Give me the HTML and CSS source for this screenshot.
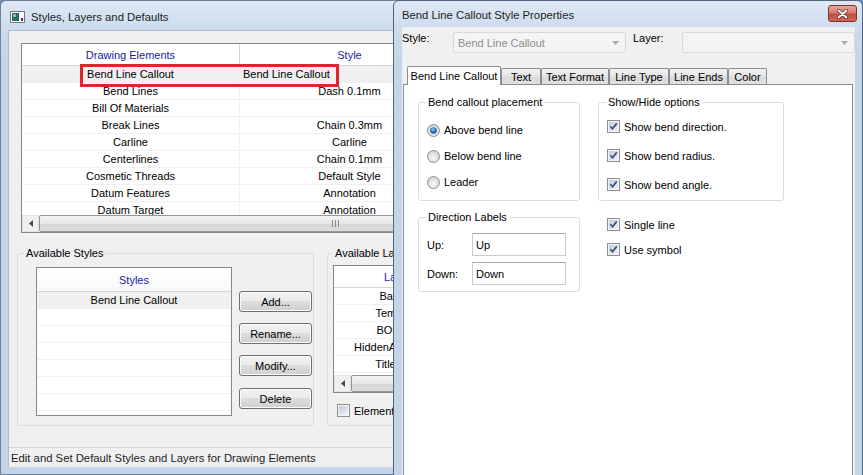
FILE: index.html
```html
<!DOCTYPE html>
<html>
<head>
<meta charset="utf-8">
<title>Styles, Layers and Defaults</title>
<link rel="stylesheet" href="styles.css">
</head>
<body>
<svg class="defs" aria-hidden="true">
  <defs>
    <linearGradient id="cbIn" x1="0" y1="0" x2="1" y2="1">
      <stop offset="0" stop-color="#c3cddc"/>
      <stop offset="1" stop-color="#eef2f7"/>
    </linearGradient>
    <radialGradient id="rbBg" cx="0.5" cy="0.6" r="0.6">
      <stop offset="0" stop-color="#fbfbfb"/>
      <stop offset="1" stop-color="#cfcfcf"/>
    </radialGradient>
    <radialGradient id="rbDot" cx="0.45" cy="0.35" r="0.7">
      <stop offset="0" stop-color="#8fc4f0"/>
      <stop offset="0.6" stop-color="#2a6db6"/>
      <stop offset="1" stop-color="#0f3f80"/>
    </radialGradient>
  </defs>
</svg>

<section class="win main-win">
  <header class="titlebar">
    <svg class="appicon" viewBox="0 0 15 12" width="15" height="12">
      <rect x="0.5" y="0.5" width="14" height="11" fill="#ffffff" stroke="#6d7a86"/>
      <rect x="2" y="2" width="7" height="8" fill="#2f6b62"/>
      <rect x="3" y="3" width="3" height="3" fill="#8fb5ad"/>
      <rect x="11" y="7" width="2" height="3" fill="#3a3a3a"/>
    </svg>
    <span class="title">Styles, Layers and Defaults</span>
  </header>
  <div class="client main-client">
    <div class="lv elements">
      <div class="lv-head">
        <div class="col c1">Drawing Elements</div>
        <div class="col c2">Style</div>
      </div>
      <div class="lv-body">
        <div class="row sel"><div class="col c1">Bend Line Callout</div><div class="col c2 lft">Bend Line Callout</div></div>
        <div class="row"><div class="col c1">Bend Lines</div><div class="col c2">Dash 0.1mm</div></div>
        <div class="row"><div class="col c1">Bill Of Materials</div><div class="col c2"></div></div>
        <div class="row"><div class="col c1">Break Lines</div><div class="col c2">Chain 0.3mm</div></div>
        <div class="row"><div class="col c1">Carline</div><div class="col c2">Carline</div></div>
        <div class="row"><div class="col c1">Centerlines</div><div class="col c2">Chain 0.1mm</div></div>
        <div class="row"><div class="col c1">Cosmetic Threads</div><div class="col c2">Default Style</div></div>
        <div class="row"><div class="col c1">Datum Features</div><div class="col c2">Annotation</div></div>
        <div class="row"><div class="col c1">Datum Target</div><div class="col c2">Annotation</div></div>
      </div>
      <div class="hscroll">
        <div class="sb-btn"><svg viewBox="0 0 4 7" width="4" height="7"><path d="M4 0V7L0 3.5Z" fill="#4a4a4a"/></svg></div>
        <div class="sb-thumb wide-thumb"><svg class="grip" viewBox="0 0 7 7" width="7" height="7"><path d="M0.5 0v7M3.5 0v7M6.5 0v7" stroke="#8a8a8a"/></svg></div>
      </div>
      <div class="highlight"></div>
    </div>

    <div class="lower">
      <fieldset class="grp styles-grp">
        <legend>Available Styles</legend>
        <div class="grp-in styles-in">
          <div class="lv styles-lv">
            <div class="lv-head short"><div class="col full">Styles</div></div>
            <div class="lv-body">
              <div class="row sel"><div class="col full">Bend Line Callout</div></div>
              <div class="row"><div class="col full"></div></div>
              <div class="row"><div class="col full"></div></div>
              <div class="row"><div class="col full"></div></div>
              <div class="row"><div class="col full"></div></div>
              <div class="row"><div class="col full"></div></div>
              <div class="row"><div class="col full"></div></div>
            </div>
          </div>
          <div class="btns">
            <button class="btn">Add...</button>
            <button class="btn">Rename...</button>
            <button class="btn">Modify...</button>
            <button class="btn">Delete</button>
          </div>
        </div>
      </fieldset>

      <fieldset class="grp layers-grp">
        <legend>Available Layers</legend>
        <div class="grp-in layers-in">
          <div class="lv layers-lv">
            <div class="lv-head"><div class="col lc">Layers</div></div>
            <div class="lv-body">
              <div class="row"><div class="col lc">Balloons</div></div>
              <div class="row"><div class="col lc">Templates</div></div>
              <div class="row"><div class="col lc">BOM Text</div></div>
              <div class="row"><div class="col lc">HiddenAnnotations</div></div>
              <div class="row"><div class="col lc">Title Block</div></div>
            </div>
            <div class="hscroll">
              <div class="sb-btn"><svg viewBox="0 0 4 7" width="4" height="7"><path d="M4 0V7L0 3.5Z" fill="#4a4a4a"/></svg></div>
              <div class="sb-thumb"></div>
            </div>
          </div>
          <label class="chk elements-chk">
            <svg class="cb" viewBox="0 0 13 13" width="13" height="13">
              <rect x="0.5" y="0.5" width="12" height="12" fill="#f4f4f4" stroke="#8e8f8f"/>
              <rect x="2" y="2" width="9" height="9" fill="url(#cbIn)"/>
            </svg>
            <span>Elements with layers</span>
          </label>
        </div>
      </fieldset>
    </div>

    <div class="status">Edit and Set Default Styles and Layers for Drawing Elements</div>
  </div>
</section>

<section class="win dlg">
  <header class="titlebar dlg-title">
    <span class="title">Bend Line Callout Style Properties</span>
    <div class="close">
      <svg viewBox="0 0 11 10" width="11" height="10">
        <path d="M1.5 1.5L9.5 8.5M9.5 1.5L1.5 8.5" stroke="#5a2522" stroke-width="3.2" stroke-linecap="round"/>
        <path d="M1.5 1.5L9.5 8.5M9.5 1.5L1.5 8.5" stroke="#ffffff" stroke-width="1.8" stroke-linecap="round"/>
      </svg>
    </div>
  </header>
  <div class="client dlg-client">
    <div class="combo-row">
      <span class="lbl style-lbl">Style:</span>
      <div class="combo"><span class="combo-text">Bend Line Callout</span><svg class="dd" viewBox="0 0 7 4" width="7" height="4"><path d="M0 0H7L3.5 4Z" fill="#a9a9a9"/></svg></div>
      <span class="lbl layer-lbl">Layer:</span>
      <div class="combo"><span class="combo-text"></span><svg class="dd" viewBox="0 0 7 4" width="7" height="4"><path d="M0 0H7L3.5 4Z" fill="#a9a9a9"/></svg></div>
    </div>

    <div class="tabs">
      <div class="tab active">Bend Line Callout</div>
      <div class="tab t-text">Text</div>
      <div class="tab t-fmt">Text Format</div>
      <div class="tab t-lt">Line Type</div>
      <div class="tab t-le">Line Ends</div>
      <div class="tab t-col">Color</div>
    </div>

    <div class="tabpanel">
      <div class="panel-grid">
        <fieldset class="grp dgrp placement">
          <legend>Bend callout placement</legend>
          <div class="opt-list radios">
            <label class="opt"><svg class="rb" viewBox="0 0 13 13" width="13" height="13"><circle cx="6.5" cy="6.5" r="6" fill="url(#rbBg)" stroke="#8e8f8f"/><circle cx="6.5" cy="6.5" r="3.3" fill="url(#rbDot)"/></svg><span>Above bend line</span></label>
            <label class="opt"><svg class="rb" viewBox="0 0 13 13" width="13" height="13"><circle cx="6.5" cy="6.5" r="6" fill="url(#rbBg)" stroke="#8e8f8f"/></svg><span>Below bend line</span></label>
            <label class="opt"><svg class="rb" viewBox="0 0 13 13" width="13" height="13"><circle cx="6.5" cy="6.5" r="6" fill="url(#rbBg)" stroke="#8e8f8f"/></svg><span>Leader</span></label>
          </div>
        </fieldset>

        <fieldset class="grp dgrp showhide">
          <legend>Show/Hide options</legend>
          <div class="opt-list checks">
            <label class="opt"><svg class="cb" viewBox="0 0 13 13" width="13" height="13"><rect x="0.5" y="0.5" width="12" height="12" fill="#f4f4f4" stroke="#8e8f8f"/><rect x="2" y="2" width="9" height="9" fill="url(#cbIn)"/><path d="M3.3 6.3L5.5 8.8L9.8 3.4" fill="none" stroke="#3d4f86" stroke-width="1.7"/></svg><span>Show bend direction.</span></label>
            <label class="opt"><svg class="cb" viewBox="0 0 13 13" width="13" height="13"><rect x="0.5" y="0.5" width="12" height="12" fill="#f4f4f4" stroke="#8e8f8f"/><rect x="2" y="2" width="9" height="9" fill="url(#cbIn)"/><path d="M3.3 6.3L5.5 8.8L9.8 3.4" fill="none" stroke="#3d4f86" stroke-width="1.7"/></svg><span>Show bend radius.</span></label>
            <label class="opt"><svg class="cb" viewBox="0 0 13 13" width="13" height="13"><rect x="0.5" y="0.5" width="12" height="12" fill="#f4f4f4" stroke="#8e8f8f"/><rect x="2" y="2" width="9" height="9" fill="url(#cbIn)"/><path d="M3.3 6.3L5.5 8.8L9.8 3.4" fill="none" stroke="#3d4f86" stroke-width="1.7"/></svg><span>Show bend angle.</span></label>
          </div>
        </fieldset>

        <fieldset class="grp dgrp dirlabels">
          <legend>Direction Labels</legend>
          <div class="dir-grid">
            <span class="dir-lbl">Up:</span><div class="textbox">Up</div>
            <span class="dir-lbl">Down:</span><div class="textbox">Down</div>
          </div>
        </fieldset>

        <div class="opt-list extra">
          <label class="opt"><svg class="cb" viewBox="0 0 13 13" width="13" height="13"><rect x="0.5" y="0.5" width="12" height="12" fill="#f4f4f4" stroke="#8e8f8f"/><rect x="2" y="2" width="9" height="9" fill="url(#cbIn)"/><path d="M3.3 6.3L5.5 8.8L9.8 3.4" fill="none" stroke="#3d4f86" stroke-width="1.7"/></svg><span>Single line</span></label>
          <label class="opt"><svg class="cb" viewBox="0 0 13 13" width="13" height="13"><rect x="0.5" y="0.5" width="12" height="12" fill="#f4f4f4" stroke="#8e8f8f"/><rect x="2" y="2" width="9" height="9" fill="url(#cbIn)"/><path d="M3.3 6.3L5.5 8.8L9.8 3.4" fill="none" stroke="#3d4f86" stroke-width="1.7"/></svg><span>Use symbol</span></label>
        </div>
      </div>
    </div>
  </div>
</section>
</body>
</html>
```

FILE: styles.css
```css
* { box-sizing: border-box; }
html, body { margin: 0; padding: 0; }
body {
  width: 863px;
  height: 475px;
  overflow: hidden;
  position: relative;
  font-family: "Liberation Sans", Arial, sans-serif;
  font-size: 11px;
  color: #000;
  background: #6b8cb5;
}
.defs { position: absolute; width: 0; height: 0; }

/* ---------- window frames ---------- */
.win {
  position: absolute;
  top: 0;
  display: flex;
  flex-direction: column;
  border: 1px solid #6f8299;
  border-radius: 6px 6px 0 0;
  background: linear-gradient(#dfe9f5 0px, #ccdbed 28px, #c4d5ea 60px, #c4d5ea 100%);
}
.main-win {
  left: 0;
  width: 440px;
  height: 475px;
  padding: 0 7px 7px 7px;
}
.dlg {
  left: 393px;
  width: 470px;
  height: 490px;
  padding: 0 7px 0 8px;
  border-color: #4f6680;
}
.titlebar {
  height: 29px;
  flex: none;
  display: flex;
  align-items: center;
  padding-left: 2px;
  padding-top: 3px;
  font-size: 11.3px;
  color: #1e1e1e;
}
.appicon { flex: none; margin-right: 6px; margin-top: -1px; }
.dlg-title { height: 26px; padding-left: 0; padding-top: 0; align-items: flex-start; }
.dlg-title .title { margin-top: 8px; }
.close {
  margin-left: auto;
  margin-right: -2px;
  margin-top: 4px;
  width: 29px;
  height: 17px;
  border: 1px solid #7d3229;
  border-radius: 3px;
  background: linear-gradient(#e8a69e 0%, #d47a6f 45%, #c24f40 55%, #cf6a54 100%);
  display: flex;
  align-items: center;
  justify-content: center;
}

.client {
  flex: 1;
  background: #f0f0f0;
  display: flex;
  flex-direction: column;
  min-height: 0;
}
.main-client { border: 1px solid #aebdd0; border-width: 1px 0 0 1px; }

/* ---------- list views ---------- */
.lv {
  position: relative;
  background: #fff;
  border: 1px solid #828790;
  display: flex;
  flex-direction: column;
  overflow: hidden;
}
.lv-head {
  flex: none;
  height: 22px;
  display: flex;
  border-bottom: 1px solid #d5d5d5;
  color: #1a1aa6;
}
.lv-head.short { height: 24px; background: linear-gradient(#ffffff, #f7f8fa); }
.lv-head .col { border-right: 1px solid #d5d5d5; }
.lv-body { flex: 1; overflow: hidden; }
.row {
  height: 17px;
  display: flex;
  border-bottom: 1px solid #f0f0f0;
}
.row .col { border-right: 1px solid #f0f0f0; }
.row.sel { background: #f0f0f0; }
.col {
  display: flex;
  align-items: center;
  justify-content: center;
  white-space: nowrap;
  overflow: hidden;
  flex: none;
}
.c1 { width: 218px; }
.c2 { width: 220px; }
.col.lft { justify-content: flex-start; padding-left: 3px; }
.full { width: 100%; border-right: 0 !important; }
.lc { width: 134px; }

.elements {
  flex: none;
  margin: 12px 0 0 12px;
  width: 450px;
  height: 190px;
}
.highlight {
  position: absolute;
  left: 58px;
  top: 20px;
  width: 259px;
  height: 23px;
  border: 3px solid #e0242c;
}

.hscroll {
  flex: none;
  height: 17px;
  display: flex;
  background: #e8e8e8;
}
.sb-btn {
  width: 17px;
  flex: none;
  display: flex;
  align-items: center;
  justify-content: center;
  background: #f0f0f0;
  border: 1px solid #e3e3e3;
}
.sb-thumb {
  flex: 1;
  border: 1px solid #979797;
  border-radius: 2px;
  background: linear-gradient(#f4f4f4, #e6e6e6 50%, #d7d7d7 51%, #dcdcdc);
  display: flex;
  align-items: center;
}
.grip { margin-left: 292px; }

/* ---------- group boxes ---------- */
.lower {
  flex: none;
  display: flex;
  margin-top: 14px;
  padding-left: 8px;
}
.grp {
  margin: 0;
  padding: 0;
  border: 1px solid #d5dfe5;
  border-radius: 3px;
  min-width: 0;
}
.grp legend {
  padding: 0 2px;
  margin-left: 6px;
  line-height: 13px;
}
.styles-grp { width: 297px; height: 179px; flex: none; }
.styles-in { display: flex; gap: 7px; padding: 7px 1px 0 18px; }
.styles-lv { width: 196px; height: 149px; flex: none; }
.btns {
  display: flex;
  flex-direction: column;
  gap: 11px;
  padding-top: 24px;
}
.btn {
  width: 73px;
  height: 21px;
  font: inherit;
  color: #000;
  padding: 0;
  border: 1px solid #707070;
  border-radius: 3px;
  background: linear-gradient(#f2f2f2 0%, #ebebeb 45%, #dddddd 50%, #cfcfcf 100%);
  box-shadow: inset 0 0 0 1px #fbfbfb;
}
.btns .btn:last-child { margin-top: 1px; }

.layers-grp { width: 120px; height: 179px; flex: none; margin-left: 13px; }
.layers-grp legend { margin-left: 5px; }
.layers-in { padding: 5px 0 0 5px; }
.layers-lv { width: 160px; height: 128px; }
.chk { display: flex; align-items: center; gap: 4px; white-space: nowrap; }
.elements-chk { margin: 11px 0 0 4px; }

.status {
  margin-top: auto;
  height: 20px;
  flex: none;
  border-top: 1px solid #d7d7d7;
  display: flex;
  align-items: center;
  padding-left: 2px;
  padding-top: 1px;
  font-size: 11.3px;
  color: #1e1e1e;
}

/* ---------- dialog ---------- */
.combo-row {
  display: flex;
  align-items: flex-start;
  margin-top: 5px;
  flex: none;
}
.lbl { line-height: 13px; }
.style-lbl { width: 51px; }
.layer-lbl { width: 49px; margin-left: 7px; }
.combo {
  width: 173px;
  height: 21px;
  border: 1px solid #d9d9d9;
  border-radius: 2px;
  background: #f4f4f4;
  display: flex;
  align-items: center;
  padding: 0 6px 0 4px;
  color: #8d8d8d;
}
.combo-text { flex: 1; }
.dd { flex: none; }

.tabs {
  flex: none;
  display: flex;
  align-items: flex-start;
  height: 19px;
  margin-top: 13px;
  margin-bottom: -1px;
  padding-left: 5px;
  position: relative;
  z-index: 1;
}
.tab {
  height: 16px;
  margin-top: 2px;
  border: 1px solid #898c95;
  border-bottom: 0;
  border-radius: 2px 2px 0 0;
  background: linear-gradient(#f3f3f3, #e3e3e3 50%, #dadada 51%, #e0e0e0);
  display: flex;
  align-items: center;
  justify-content: center;
  white-space: nowrap;
}
.tab.active {
  height: 19px;
  margin-top: 0;
  width: 94px;
  background: #fff;
  padding-bottom: 1px;
}
.t-text { width: 40px; }
.t-fmt { width: 68px; }
.t-lt { width: 60px; }
.t-le { width: 59px; }
.t-col { width: 39px; }

.tabpanel {
  flex: 1;
  margin-left: 1px;
  width: 450px;
  background: #fff;
  border: 1px solid #898c95;
}
.panel-grid {
  display: grid;
  grid-template-columns: 162px 186px;
  column-gap: 18px;
  row-gap: 10px;
  padding: 11px 0 0 14px;
  align-items: start;
}
.dgrp legend { margin-left: 7px; }
.placement, .showhide { height: 105px; }
.dirlabels { height: 81px; }
.opt-list { display: flex; flex-direction: column; }
.opt { display: flex; align-items: center; white-space: nowrap; }
.radios { padding: 8px 0 0 8px; }
.radios .opt { height: 26px; gap: 4px; }
.checks { padding: 3px 0 0 8px; }
.checks .opt { height: 29px; gap: 4px; }
.extra { padding: 1px 0 0 9px; }
.extra .opt { height: 25px; gap: 4px; }
.rb, .cb { flex: none; }

.dir-grid {
  display: grid;
  grid-template-columns: 45px 94px;
  row-gap: 6px;
  padding: 9px 0 0 8px;
  align-items: center;
}
.textbox {
  height: 23px;
  border: 1px solid #c9ccd2;
  border-top-color: #abadb3;
  background: #fff;
  display: flex;
  align-items: center;
  padding-left: 3px;
}
```
